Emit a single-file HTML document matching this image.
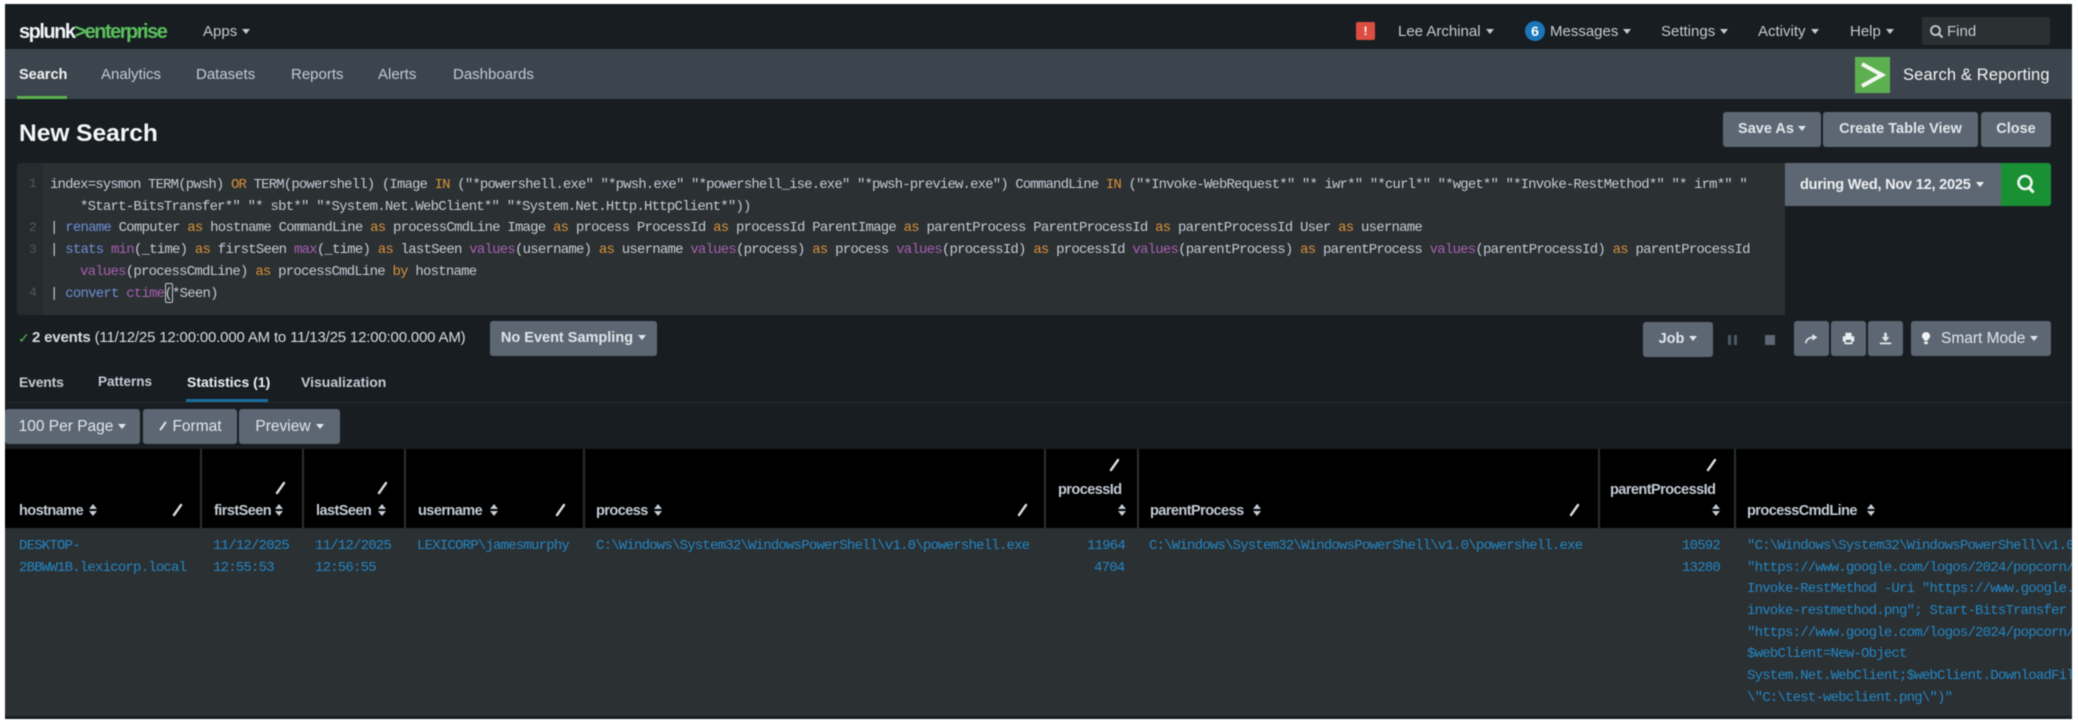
<!DOCTYPE html>
<html><head><meta charset="utf-8"><title>New Search</title>
<style>
html,body{margin:0;padding:0;background:#fff;width:2078px;height:726px;overflow:hidden}
#app{position:absolute;left:5px;top:4px;width:2067px;height:715px;background:#171d21;overflow:hidden;filter:blur(.5px)}
#app>*{position:absolute}
.t{position:absolute;white-space:nowrap;font-family:"Liberation Sans",sans-serif;color:#c3cbd4;font-size:15px;line-height:18px;transform:translateY(-50%)}
.b{position:absolute;background:#5c6773;border-radius:3px;color:#e1e6eb;font:bold 14.5px/35px "Liberation Sans",sans-serif;text-align:center;white-space:nowrap;height:35px}
.c{display:inline-block;width:0;height:0;border:4.5px solid transparent;border-top:5.5px solid currentColor;border-bottom:0;vertical-align:2px;margin-left:5px}
.m{position:absolute;white-space:pre;font-family:"Liberation Mono",monospace;font-size:14px;letter-spacing:-.78px;line-height:22px;color:#c3cbd4;transform:translateY(-50%)}
.k{color:#d9913a}.f{color:#a65fb0}.g{color:#6d8fd6}
.n{position:absolute;font:13px/22px "Liberation Mono",monospace;color:#50585f;transform:translateY(-50%)}
.h{position:absolute;white-space:nowrap;font:bold 14.5px/18px "Liberation Sans",sans-serif;letter-spacing:-.55px;color:#c3cbd4;transform:translateY(-50%)}
.l{position:absolute;white-space:pre;font-family:"Liberation Mono",monospace;font-size:14px;letter-spacing:-.8px;line-height:22px;color:#2386c4;transform:translateY(-50%)}
.v{position:absolute;top:445px;width:2px;height:79px;background:#2b3033}
</style></head><body>
<div id="app">
<div style="left:0;top:0;width:2067px;height:45px;background:#171d21"></div>
<div style="left:0;top:45px;width:2067px;height:50px;background:#3c444d"></div>
<div style="left:12px;top:92px;width:50px;height:3px;background:#5cb04f"></div>

<div class="t" style="left:14px;top:28px;font-size:20px;font-weight:bold;letter-spacing:-1.5px;color:#f2f4f5">splunk<span style="color:#5cc05c">&gt;enterprise</span></div>
<div class="t" style="left:198px;top:28px;">Apps<span class="c"></span></div>

<div class="t" style="left:14px;top:71px;color:#f2f4f5;font-weight:bold;font-size:14.5px">Search</div>
<div class="t" style="left:96px;top:71px">Analytics</div>
<div class="t" style="left:191px;top:71px">Datasets</div>
<div class="t" style="left:286px;top:71px">Reports</div>
<div class="t" style="left:373px;top:71px">Alerts</div>
<div class="t" style="left:448px;top:71px">Dashboards</div>

<div style="left:1351px;top:18px;width:19px;height:18px;background:#dc4e41;border-radius:2px;color:#fff;font:bold 12px/18px 'Liberation Sans',sans-serif;text-align:center">!</div>
<div class="t" style="left:1393px;top:28px">Lee Archinal<span class="c"></span></div>
<div style="left:1520px;top:17px;width:20px;height:20px;border-radius:50%;background:#1a76b8;color:#fff;font:bold 14px/20px 'Liberation Sans',sans-serif;text-align:center">6</div>
<div class="t" style="left:1545px;top:28px">Messages<span class="c"></span></div>
<div class="t" style="left:1656px;top:28px">Settings<span class="c"></span></div>
<div class="t" style="left:1753px;top:28px">Activity<span class="c"></span></div>
<div class="t" style="left:1845px;top:28px">Help<span class="c"></span></div>
<div style="left:1917px;top:13px;width:128px;height:28px;background:#2b3033;border-radius:2px"></div>
<svg style="left:1924px;top:20px" width="15" height="15" viewBox="0 0 15 15"><circle cx="6.500" cy="6.500" r="4.500" fill="none" stroke="#c3cbd4" stroke-width="1.800"/><path d="M10 10l3.500 3.500" stroke="#c3cbd4" stroke-width="2"/></svg>
<div class="t" style="left:1942px;top:28px">Find</div>

<div style="left:1850px;top:53px;width:35px;height:36px;background:#5cb04f"></div>
<svg style="left:1850px;top:53px" width="35" height="36" viewBox="0 0 35 36"><path d="M7 7L27 18 7 29" fill="none" stroke="#f4f8f2" stroke-width="4"/></svg>
<div class="t" style="left:1898px;top:71px;color:#f2f4f5;font-size:16.5px;letter-spacing:.15px">Search &amp; Reporting</div>

<div class="t" style="left:14px;top:129.500px;color:#f5f6f7;font-size:24.5px;font-weight:bold;line-height:30px">New Search</div>
<div class="b" style="left:1718px;top:108px;width:98px">Save As<span class="c" style="margin-left:4px"></span></div>
<div class="b" style="left:1818px;top:108px;width:155px">Create Table View</div>
<div class="b" style="left:1976px;top:108px;width:70px">Close</div>

<div style="left:12px;top:159px;width:1768px;height:152px;background:#2b3033;border-radius:3px 0 0 3px"></div>
<div style="left:12px;top:159px;width:26px;height:152px;background:#262b2e;border-radius:3px 0 0 3px"></div>
<div class="n" style="left:24px;top:180px">1</div>
<div class="n" style="left:24px;top:224px">2</div>
<div class="n" style="left:24px;top:246px">3</div>
<div class="n" style="left:24px;top:289px">4</div>
<div class="m" style="left:45px;top:180.500px;letter-spacing:-.86px">index=sysmon TERM(pwsh) <span class="k">OR</span> TERM(powershell) (Image <span class="k">IN</span> ("*powershell.exe" "*pwsh.exe" "*powershell_ise.exe" "*pwsh-preview.exe") CommandLine <span class="k">IN</span> ("*Invoke-WebRequest*" "* iwr*" "*curl*" "*wget*" "*Invoke-RestMethod*" "* irm*" "</div>
<div class="m" style="left:75px;top:202.500px">*Start-BitsTransfer*" "* sbt*" "*System.Net.WebClient*" "*System.Net.Http.HttpClient*"))</div>
<div class="m" style="left:45px;top:224px">| <span class="g">rename</span> Computer <span class="k">as</span> hostname CommandLine <span class="k">as</span> processCmdLine Image <span class="k">as</span> process ProcessId <span class="k">as</span> processId ParentImage <span class="k">as</span> parentProcess ParentProcessId <span class="k">as</span> parentProcessId User <span class="k">as</span> username</div>
<div class="m" style="left:45px;top:246px">| <span class="g">stats</span> <span class="f">min</span>(_time) <span class="k">as</span> firstSeen <span class="f">max</span>(_time) <span class="k">as</span> lastSeen <span class="f">values</span>(username) <span class="k">as</span> username <span class="f">values</span>(process) <span class="k">as</span> process <span class="f">values</span>(processId) <span class="k">as</span> processId <span class="f">values</span>(parentProcess) <span class="k">as</span> parentProcess <span class="f">values</span>(parentProcessId) <span class="k">as</span> parentProcessId</div>
<div class="m" style="left:75px;top:267.500px"><span class="f">values</span>(processCmdLine) <span class="k">as</span> processCmdLine <span class="k">by</span> hostname</div>
<div class="m" style="left:45px;top:289.500px">| <span class="g">convert</span> <span class="f">ctime</span>(*Seen)</div>
<div style="left:160px;top:279px;width:6px;height:18px;border:1px solid #c3cbd4;border-radius:2px"></div>

<div style="left:1780px;top:159px;width:216px;height:43px;background:#5c6773"></div>
<div class="t" style="left:1795px;top:181px;color:#eef0f2;font-size:14.5px;font-weight:bold;letter-spacing:-.2px">during Wed, Nov 12, 2025<span class="c"></span></div>
<div style="left:1996px;top:159px;width:50px;height:43px;background:#1a9035;border-radius:0 3px 3px 0"></div>
<svg style="left:2010px;top:169px" width="22" height="22" viewBox="0 0 22 22"><circle cx="10" cy="9.500" r="6.500" fill="none" stroke="#f2f7f2" stroke-width="2.600"/><path d="M14 14.500l4.500 5" stroke="#f2f7f2" stroke-width="3"/></svg>

<div class="t" style="left:13px;top:334px;color:#5cb04f;font-size:14px">&#10003;</div>
<div class="t" style="left:27px;top:334px;font-size:15px;color:#d9dde2;letter-spacing:-.18px"><b>2 events</b> (11/12/25 12:00:00.000 AM to 11/13/25 12:00:00.000 AM)</div>
<div class="b" style="left:485px;top:317px;width:167px">No Event Sampling<span class="c"></span></div>
<div class="b" style="left:1638px;top:318px;width:70px">Job<span class="c"></span></div>
<div style="left:1723px;top:331px;width:3px;height:10px;background:#4e5862"></div>
<div style="left:1729px;top:331px;width:3px;height:10px;background:#4e5862"></div>
<div style="left:1760px;top:331px;width:10px;height:10px;background:#5c6773"></div>
<div class="b" style="left:1789px;top:317px;width:35px"></div>
<svg style="left:1799px;top:328px" width="15" height="14" viewBox="0 0 18 16"><path d="M2 13C3 8 7 6 12 6" fill="none" stroke="#e1e6eb" stroke-width="2"/><path d="M10 2l6 4-6 4z" fill="#e1e6eb"/></svg>
<div class="b" style="left:1826px;top:317px;width:35px"></div>
<svg style="left:1836px;top:327px" width="15" height="15" viewBox="0 0 17 17"><path d="M5 2h7v4H5zM2 6h13v6h-2v3H4v-3H2z" fill="#e9edf0"/><rect x="5.500" y="10" width="6" height="3" fill="#5c6773"/></svg>
<div class="b" style="left:1863px;top:317px;width:35px"></div>
<svg style="left:1873px;top:327px" width="15" height="15" viewBox="0 0 17 17"><path d="M7 2h3v5h3l-4.500 5L4 7h3zM2 13h13v2H2z" fill="#e1e6eb"/></svg>
<div class="b" style="left:1906px;top:317px;width:140px;text-align:left;text-indent:30px;font-size:15.5px;font-weight:normal">Smart Mode<span class="c"></span></div>
<svg style="left:1915px;top:327px" width="12" height="15" viewBox="0 0 14 17"><path d="M7 1a4.500 4.500 0 0 1 3 8l-1 2H5L4 9a4.500 4.500 0 0 1 3-8zM5 12h4v3H5z" fill="#f0f2f4"/></svg>

<div class="t" style="left:14px;top:378px;font-size:14px;font-weight:bold;letter-spacing:-.2px">Events</div>
<div class="t" style="left:93px;top:378px;font-weight:bold;font-size:13.5px">Patterns</div>
<div class="t" style="left:182px;top:378px;color:#eef0f2;font-weight:bold;font-size:14px">Statistics (1)</div>
<div class="t" style="left:296px;top:378px;font-weight:bold;font-size:14px">Visualization</div>
<div style="left:181px;top:395px;width:82px;height:3px;background:#1a6ea0"></div>
<div style="left:0;top:398px;width:2067px;height:1px;background:#262b2e"></div>

<div class="b" style="left:0;top:405px;width:135px;font-weight:normal;font-size:15.5px">100 Per Page<span class="c"></span></div>
<div class="b" style="left:138px;top:405px;width:94px;font-weight:normal;font-size:15.500px"><span style="display:inline-block;width:10px;height:2px;background:#e1e6eb;transform:rotate(-55deg);vertical-align:4px;margin-right:4px"></span>Format</div>
<div class="b" style="left:234px;top:405px;width:101px;font-weight:normal;font-size:15.5px">Preview<span class="c"></span></div>

<div style="left:0;top:445px;width:2067px;height:79px;background:#000"></div>
<div style="left:0;top:524px;width:2067px;height:188px;background:#2b3033"></div>
<div style="left:0;top:712px;width:2067px;height:3px;background:#171d21"></div>
<div class="v" style="left:195px"></div>
<div class="v" style="left:297px"></div>
<div class="v" style="left:399px"></div>
<div class="v" style="left:578px"></div>
<div class="v" style="left:1039px"></div>
<div class="v" style="left:1132px"></div>
<div class="v" style="left:1593px"></div>
<div class="v" style="left:1729px"></div>

<div class="h" style="left:14px;top:507px">hostname</div>
<div class="h" style="left:209px;top:507px">firstSeen</div>
<div class="h" style="left:311px;top:507px">lastSeen</div>
<div class="h" style="left:413px;top:507px">username</div>
<div class="h" style="left:591px;top:507px">process</div>
<div class="h" style="left:1053px;top:485.500px">processId</div>
<div class="h" style="left:1145px;top:507px">parentProcess</div>
<div class="h" style="left:1605px;top:485.500px">parentProcessId</div>
<div class="h" style="left:1742px;top:507px">processCmdLine</div>

<svg width="2067" height="79" style="left:0;top:445px" viewBox="0 445 2067 79">
<g fill="#c3cbd4">
<path d="M84 505l4-5 4 5zM84 507h8l-4 5zM270 505l4-5 4 5zM270 507h8l-4 5zM373 505l4-5 4 5zM373 507h8l-4 5zM485 505l4-5 4 5zM485 507h8l-4 5zM649 505l4-5 4 5zM649 507h8l-4 5zM1113 505l4-5 4 5zM1113 507h8l-4 5zM1248 505l4-5 4 5zM1248 507h8l-4 5zM1707 505l4-5 4 5zM1707 507h8l-4 5zM1862 505l4-5 4 5zM1862 507h8l-4 5z"/>
</g>
<g stroke="#d9dde2" stroke-width="2.400" stroke-linecap="round">
<path d="M169 511l7-10M272 489l7-10M374 489l7-10M552 511l7-10M1014 511l7-10M1106 466l7-10M1566 511l7-10M1703 466l7-10"/>
</g>
</svg>

<div class="l" style="left:14px;top:541.500px">DESKTOP-</div>
<div class="l" style="left:14px;top:563.500px">2BBWW1B.lexicorp.local</div>
<div class="l" style="left:208px;top:541.500px">11/12/2025</div>
<div class="l" style="left:208px;top:563.500px">12:55:53</div>
<div class="l" style="left:310px;top:541.500px">11/12/2025</div>
<div class="l" style="left:310px;top:563.500px">12:56:55</div>
<div class="l" style="left:412px;top:541.500px">LEXICORP\jamesmurphy</div>
<div class="l" style="left:591px;top:541.500px">C:\Windows\System32\WindowsPowerShell\v1.0\powershell.exe</div>
<div class="l" style="left:1082px;top:541.500px">11964</div>
<div class="l" style="left:1089px;top:563.500px">4704</div>
<div class="l" style="left:1144px;top:541.500px">C:\Windows\System32\WindowsPowerShell\v1.0\powershell.exe</div>
<div class="l" style="left:1677px;top:541.500px">10592</div>
<div class="l" style="left:1677px;top:563.500px">13280</div>
<div style="left:1742px;top:524px;width:325px;height:188px;overflow:hidden">
<div class="l" style="left:0;top:17.500px">"C:\Windows\System32\WindowsPowerShell\v1.0\powershell.exe"</div>
<div class="l" style="left:0;top:39.500px">"https://www.google.com/logos/2024/popcorn/</div>
<div class="l" style="left:0;top:60.500px">Invoke-RestMethod -Uri "https://www.google.com</div>
<div class="l" style="left:0;top:82.500px">invoke-restmethod.png"; Start-BitsTransfer -Source</div>
<div class="l" style="left:0;top:104.500px">"https://www.google.com/logos/2024/popcorn/</div>
<div class="l" style="left:0;top:125.500px">$webClient=New-Object</div>
<div class="l" style="left:0;top:147.500px">System.Net.WebClient;$webClient.DownloadFile</div>
<div class="l" style="left:0;top:169.500px">\"C:\test-webclient.png\")"</div>
</div>
</div>
</body></html>
